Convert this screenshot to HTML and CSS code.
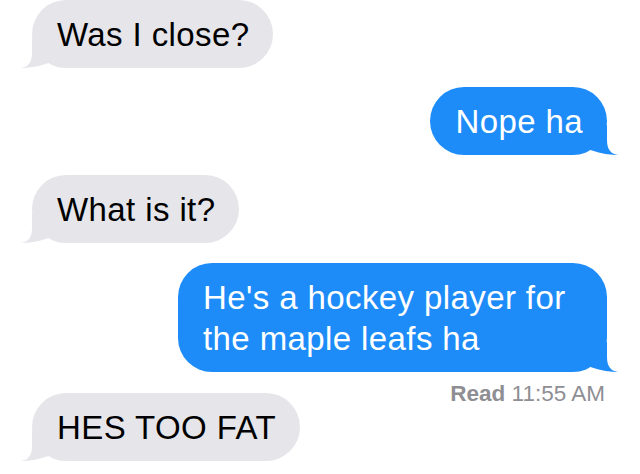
FILE: index.html
```html
<!DOCTYPE html>
<html lang="en">
<head>
  <meta charset="UTF-8">
  <meta name="viewport" content="width=device-width, initial-scale=1.0">
  <title>Messages</title>
  <link rel="stylesheet" href="styles.css">
</head>
<body>
  <div class="thread">
    <div class="row them first">
      <div class="bubble gray">Was I close?<svg class="tail" viewBox="0 0 38 30"><path d="M0 0H24V15Q24 30 37 30Q22 30 9 25.5L0 22Z"/></svg></div>
    </div>
    <div class="row me">
      <div class="bubble blue">Nope ha<svg class="tail" viewBox="0 0 38 30"><path d="M0 0H24V15Q24 30 37 30Q22 30 9 25.5L0 22Z"/></svg></div>
    </div>
    <div class="row them">
      <div class="bubble gray">What is it?<svg class="tail" viewBox="0 0 38 30"><path d="M0 0H24V15Q24 30 37 30Q22 30 9 25.5L0 22Z"/></svg></div>
    </div>
    <div class="row me last-sent">
      <div class="bubble blue">He's a hockey player for the maple leafs ha<svg class="tail" viewBox="0 0 38 30"><path d="M0 0H24V15Q24 30 37 30Q22 30 9 25.5L0 22Z"/></svg></div>
    </div>
    <div class="receipt"><b>Read</b> 11:55 AM</div>
    <div class="row them">
      <div class="bubble gray">HES TOO FAT<svg class="tail" viewBox="0 0 38 30"><path d="M0 0H24V15Q24 30 37 30Q22 30 9 25.5L0 22Z"/></svg></div>
    </div>
  </div>
</body>
</html>
```

FILE: styles.css
```css
body {
  margin: 0;
  padding: 0;
  background-color: #ffffff;
  font-family: 'Liberation Sans', Arial, sans-serif;
  overflow: hidden;
}
.thread {
  display: flex;
  flex-direction: column;
  padding: 0 33px 0 32px;
}
.row {
  display: flex;
  margin-bottom: 20px;
}
.row.first {
  margin-bottom: 19px;
}
.row.me {
  justify-content: flex-end;
}
.row.last-sent {
  margin-bottom: 11px;
}
.bubble {
  position: relative;
  box-sizing: border-box;
  max-width: 429px;
  padding: 13.5px 24px 13.5px 25px;
  border-radius: 34px;
  font-size: 33px;
  line-height: 41px;
  letter-spacing: 0.4px;
}
.bubble.gray {
  background-color: #e5e5ea;
  color: #000000;
}
.bubble.blue {
  background-color: #1d8cf8;
  color: #ffffff;
}
.tail {
  position: absolute;
  bottom: 0;
  width: 38px;
  height: 30px;
}
.gray .tail {
  left: -14px;
  transform: scaleX(-1);
  fill: #e5e5ea;
}
.blue .tail {
  right: -14px;
  fill: #1d8cf8;
}
.receipt {
  align-self: flex-end;
  margin-right: 2px;
  margin-bottom: -12px;
  font-size: 22.5px;
  line-height: 22px;
  color: #8e8e93;
}
.receipt b {
  font-weight: bold;
}
```
